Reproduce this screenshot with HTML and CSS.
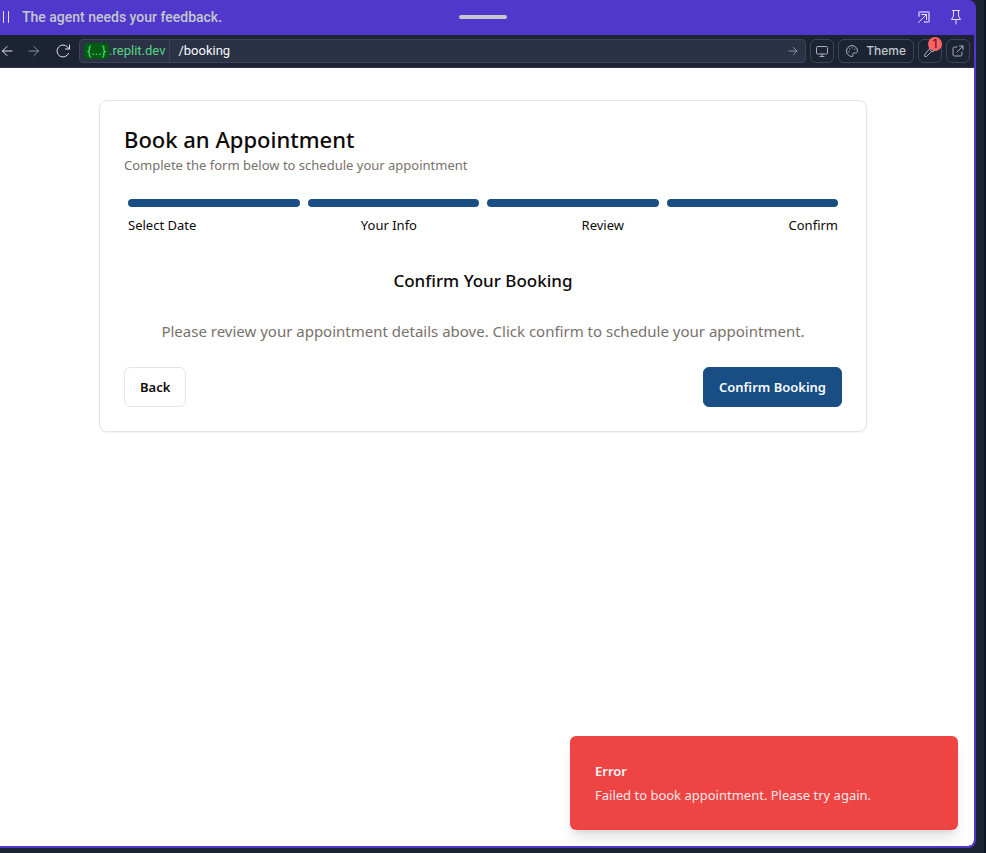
FILE: index.html
```html
<!DOCTYPE html>
<html lang="en">
<head>
<meta charset="utf-8">
<meta name="viewport" content="width=device-width, initial-scale=1">
<title>Book an Appointment</title>
<link rel="stylesheet" href="styles.css">
</head>
<body>
<div class="workspace">
  <div class="pane">
    <header class="pane-header">
      <div class="status">
        <svg class="pause" width="8" height="14" viewBox="0 0 8 14" aria-hidden="true"><path d="M1.500 1.500v11M6.500 1.500v11"/></svg>
        <span>The agent needs your feedback.</span>
      </div>
      <span class="grip"></span>
      <div class="pane-actions">
        <button class="plain" aria-label="Pop out">
          <svg width="14" height="14" viewBox="0 0 14 14"><path opacity=".6" stroke-width="2" d="M2 6V3a1 1 0 0 1 1-1h8a1 1 0 0 1 1 1v8a1 1 0 0 1-1 1H7.500"/><path d="M1.500 12.500l8-8M4.500 4.500h5v5"/></svg>
        </button>
        <button class="plain" aria-label="Pin">
          <svg width="12" height="16" viewBox="0 0 12 16"><path d="M2.500 1.500h7M3.500 1.500v5.500L1.500 10.500h9L8.500 7V1.500M6 10.500V15"/></svg>
        </button>
      </div>
    </header>

    <nav class="toolbar">
      <div class="history">
        <button class="plain" aria-label="Go back"><svg width="12" height="12" viewBox="0 0 12 12"><path d="M11 6H1.500M6 1.500L1.500 6 6 10.500"/></svg></button>
        <button class="plain dim" aria-label="Go forward"><svg width="12" height="12" viewBox="0 0 12 12"><path d="M1 6h9.500M6 1.500L10.500 6 6 10.500"/></svg></button>
        <button class="plain" aria-label="Reload"><svg width="16" height="14" viewBox="0 0 16 14"><path d="M13.500 9.500A6 6 0 1 1 12.500 3L14.500 5M14.500 1v4h-4"/></svg></button>
      </div>
      <div class="address">
        <span class="host"><span class="token">{...}</span>.replit.dev</span>
        <input class="path" type="text" value="/booking" aria-label="Path">
        <button class="plain go" aria-label="Open path"><svg width="10" height="10" viewBox="0 0 10 10"><path d="M1 5h8M5.500 1.500L9 5 5.500 8.500"/></svg></button>
      </div>
      <button class="tool" aria-label="Device size"><svg width="12" height="12" viewBox="0 0 12 12"><rect x="0.500" y="1.500" width="11" height="7.500" rx="1"/><path d="M4 11.500h4M6 9v2.500"/></svg></button>
      <button class="tool theme"><svg width="12" height="12" viewBox="0 0 12 12"><path d="M6 .5a5.500 5.500 0 1 0 0 11c1.200 0 1-1 .7-1.700C6.300 8.800 7 8 8 8h1.500c1.200 0 2-.8 2-2C11.500 3 9 .5 6 .5z"/><path d="M3 6.500v.4M3.800 3.700v.4M6.300 2.600v.4M8.700 4v.4"/></svg><span>Theme</span></button>
      <button class="tool" aria-label="Developer tools, 1 error"><svg width="12" height="12" viewBox="0 0 12 12"><path d="M5.500 4.500l2 2L2.500 11.500H.8V9.700zM7.500 6.500c2 .6 4-1 4-3L9.500 5 7 3l1.500-2C6.500.8 4.900 2.500 5.500 4.500"/></svg><span class="badge">1</span></button>
      <button class="tool" aria-label="Open in new tab"><svg width="12" height="12" viewBox="0 0 12 12"><path d="M5 2H2.500A1.500 1.500 0 0 0 1 3.500v6A1.500 1.500 0 0 0 2.500 11h6A1.500 1.500 0 0 0 10 9.500V7M7.500 1H11v3.500M11 1L5 7"/></svg></button>
    </nav>

    <main class="page">
      <section class="card">
        <h1>Book an Appointment</h1>
        <p class="lead">Complete the form below to schedule your appointment</p>
        <div class="steps">
          <div class="bars"><span></span><span></span><span></span><span></span></div>
          <div class="labels"><span>Select Date</span><span>Your Info</span><span>Review</span><span>Confirm</span></div>
        </div>
        <div class="confirm">
          <h2>Confirm Your Booking</h2>
          <p>Please review your appointment details above. Click confirm to schedule your appointment.</p>
        </div>
        <div class="actions">
          <button class="btn outline">Back</button>
          <button class="btn primary">Confirm Booking</button>
        </div>
      </section>
      <div class="toast" role="alert">
        <strong>Error</strong>
        <span>Failed to book appointment. Please try again.</span>
      </div>
    </main>
  </div>
</div>
</body>
</html>
```

FILE: styles.css
```css
* { box-sizing: border-box; }
body, h1, h2, p { margin: 0; }
body { background: #0e1525; font-family: "Noto Sans", "Open Sans", sans-serif; color: #0c0a09; }
button, input { font: inherit; color: inherit; }
svg { display: block; flex: none; fill: none; stroke: currentColor; stroke-linecap: round; stroke-linejoin: round; }

.workspace { min-height: 100vh; margin-right: 2px; padding: 0 8px 5px 0; background: #1c2333; display: flex; }
.pane {
  flex: 1; min-width: 0; display: flex; flex-direction: column; overflow: hidden;
  background: #5138cc; border: solid #5138cc; border-width: 0 2px 2px 0; border-radius: 0 8px 8px 0;
}

.pane-header {
  height: 35px; padding: 0 10px 1px 2px; color: #c2c8cc;
  display: grid; grid-template-columns: 1fr 48px 1fr; align-items: center;
  font: 500 14px/20px Roboto, sans-serif;
}
.status { display: flex; align-items: center; gap: 12px; }
.pause { color: #e4e0f8; }
.grip { height: 4px; border-radius: 2px; background: #c8c8cc; }
.pane-actions { display: flex; justify-content: flex-end; gap: 19px; padding-right: 2px; color: #e4e0f8; }
.plain { display: flex; align-items: center; justify-content: center; padding: 0; border: 0; background: none; }

.toolbar {
  height: 33px; padding: 0 4px 0 1px; display: flex; align-items: center; gap: 4px;
  background: #1c2333; border-bottom: 1px solid #2b3245; color: #c2c8cc;
  font: 12px/16px Inter, sans-serif;
}
.history { display: flex; align-items: center; gap: 15px; margin-right: 4px; color: #e0e4ea; }
.dim { color: #8a90a0; }
.address {
  flex: 1; height: 24px; display: flex; align-items: center;
  background: #2b3245; border: 1px solid #3c445c; border-radius: 4px;
}
.host { height: 22px; padding: 0 4px; display: flex; align-items: center; border-right: 1px solid #3c445c; color: #57d683; font: 13px/16px Roboto, sans-serif; }
.token { padding: 0 3px; background: #005c12; border-radius: 4px; }
.path { flex: 1; min-width: 0; padding: 0 8px; border: 0; outline: 0; background: none; color: #f5f9fc; font: 13px/16px Roboto, sans-serif; }
.go { width: 24px; color: #8a90a0; }
.tool {
  position: relative; width: 24px; height: 24px; padding: 0; display: flex; align-items: center; justify-content: center;
  background: none; border: 1px solid #3c445c; border-radius: 6px;
}
.tool svg { color: #a8aeb8; }
.theme { width: auto; padding: 0 7px; gap: 8px; font-weight: 500; }
.badge {
  position: absolute; top: -3px; right: -1px; width: 14px; height: 14px; border-radius: 7px;
  background: #ff6166; color: #520a0c; font-size: 12px; line-height: 14px; text-align: center;
}

.page { position: relative; flex: 1; padding: 32px 8px 32px 0; background: #fff; border-radius: 0 0 6px 0; }
.card {
  max-width: 768px; margin: 0 auto; padding: 24px;
  border: 1px solid #e7e5e4; border-radius: 8px; box-shadow: 0 1px 2px rgba(0, 0, 0, .06);
}
h1 { font-size: 22px; font-weight: 500; line-height: 28px; }
.lead { font-size: 13px; line-height: 24px; color: #78716c; }
.steps { margin: 20px 0 0; padding: 0 4px; font-size: 13px; line-height: 20px; }
.bars { display: flex; gap: 8px; padding-top: 2px; }
.bars span { flex: 1; height: 8px; border-radius: 4px; background: #184e84; }
.labels { display: flex; justify-content: space-between; margin-top: 8px; }
.confirm { padding-top: 32px; text-align: center; }
h2 { font-size: 17px; font-weight: 500; line-height: 28px; }
.confirm p { margin-top: 24px; font-size: 15px; line-height: 24px; color: #78716c; }
.actions { display: flex; justify-content: space-between; margin-top: 24px; }
.btn { height: 40px; padding: 0 15px; border: 1px solid #e7e5e4; border-radius: 6px; background: #fff; font-size: 13px; font-weight: 600; }
.primary { background: #184e84; border-color: #184e84; color: #f8fafc; }

.toast {
  position: absolute; right: 16px; bottom: 16px; width: 388px; max-width: 90%; padding: 25px;
  display: flex; flex-direction: column; gap: 4px;
  background: #ef4444; color: #fafaf9; border-radius: 6px; font-size: 13px; line-height: 20px;
  box-shadow: 0 10px 15px -3px rgba(0, 0, 0, .12), 0 4px 6px -4px rgba(0, 0, 0, .12);
}
.toast strong { font-weight: 600; }
.toast span { opacity: .9; }
```
